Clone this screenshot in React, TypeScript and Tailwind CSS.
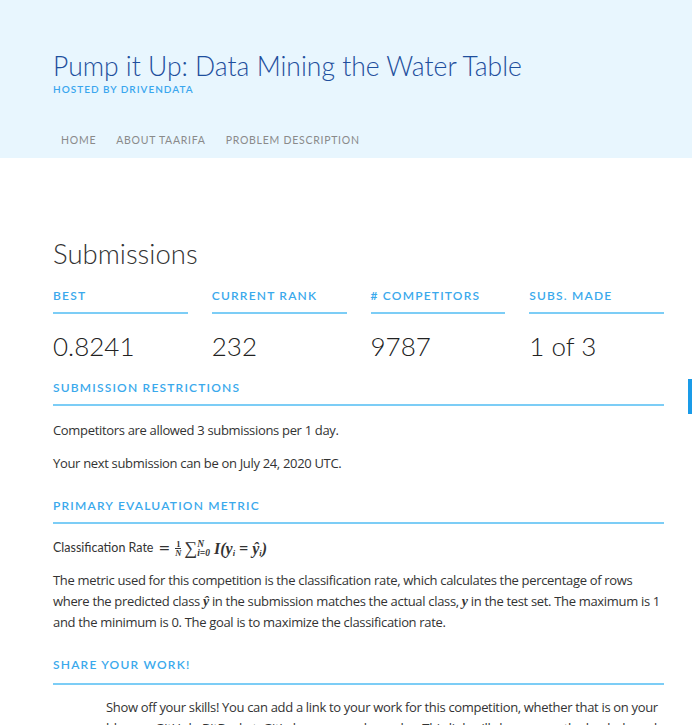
import React from "react";

const stats = [
  { label: "BEST", value: "0.8241" },
  { label: "CURRENT RANK", value: "232" },
  { label: "# COMPETITORS", value: "9787" },
  { label: "SUBS. MADE", value: "1 of 3" },
];

const SectionHead = ({ children, pad = "pb-[8px]" }: { children: React.ReactNode; pad?: string }) => (
  <div className={`border-b-2 border-[#7ccdf6] ${pad}`}>
    <h3 className="text-[12px] font-semibold tracking-[0.1em] text-[#3aa9ec] leading-[16px]">
      {children}
    </h3>
  </div>
);

export default function App() {
  return (
    <div className="relative min-h-[725px] w-[692px] overflow-hidden bg-white font-['Lato',sans-serif]">
      <header className="h-[158px] bg-[#e8f6fe] pl-[53px] pt-[50px]">
        <h1 className="text-[26.5px] font-light leading-[32px] text-[#1e4f9d]">
          Pump it Up: Data Mining the Water Table
        </h1>
        <p className="mt-[1px] text-[10px] font-semibold tracking-[0.1em] text-[#3aa6ee] leading-[12px]">
          HOSTED BY DRIVENDATA
        </p>
        <nav className="mt-[38px] ml-[8px] flex gap-[20px] text-[10.5px] tracking-[0.07em] text-[#8a8a8a]">
          <span>HOME</span>
          <span>ABOUT TAARIFA</span>
          <span>PROBLEM DESCRIPTION</span>
        </nav>
      </header>

      <main className="w-[664px] pl-[53px] pt-[79px]">
        <h2 className="text-[27.5px] font-light leading-[34px] text-[#333]">Submissions</h2>

        <div className="mt-[17px] grid grid-cols-4 gap-[24px]">
          {stats.map((s) => (
            <div key={s.label}>
              <div className="border-b-2 border-[#7ccdf6] pb-[8px] text-[12px] font-semibold tracking-[0.1em] text-[#3aa9ec] leading-[16px]">
                {s.label}
              </div>
              <div className="mt-[16px] text-[26px] font-light leading-[32px] text-[#222]">{s.value}</div>
            </div>
          ))}
        </div>

        <div className="mt-[18px]">
          <SectionHead>SUBMISSION RESTRICTIONS</SectionHead>
        </div>

        <div className="font-['Open_Sans',sans-serif] text-[13px] tracking-[-0.025em] text-[#333]">
          <p className="mt-[14px] leading-[20px]">Competitors are allowed 3 submissions per 1 day.</p>
          <p className="mt-[13px] leading-[20px]">Your next submission can be on July 24, 2020 UTC.</p>
        </div>

        <div className="mt-[25px]">
          <SectionHead>PRIMARY EVALUATION METRIC</SectionHead>
        </div>

        <div className="mt-[11px] flex items-center text-[#333]">
          <span className="text-[12.5px]">Classification Rate</span>
          <span className="mx-[5px] font-['DejaVu_Serif',serif] text-[14px]">=</span>
          <span className="inline-flex flex-col items-center font-['Liberation_Serif',serif] text-[8.5px] leading-[8px]">
            <span className="font-bold">1</span>
            <span className="border-t border-[#333] italic font-bold">N</span>
          </span>
          <span className="ml-[3px] font-['Liberation_Serif',serif] text-[18px]">∑</span>
          <span className="inline-flex flex-col font-['Liberation_Serif',serif] text-[9.5px] italic leading-[9px] font-bold">
            <span>N</span>
            <span>i=0</span>
          </span>
          <span className="ml-[4px] font-['Liberation_Serif',serif] text-[16px] italic font-bold">
            I(y<sub className="text-[8.5px]">i</sub> = ŷ<sub className="text-[8.5px]">i</sub>)
          </span>
        </div>

        <p className="mt-[8px] font-['Open_Sans',sans-serif] text-[13px] tracking-[-0.025em] leading-[21px] text-[#333]">
          The metric used for this competition is the classification rate, which calculates the percentage of rows
          where the predicted class <i className="font-['Liberation_Serif',serif] font-bold text-[14px]">ŷ</i> in the
          submission matches the actual class, <i className="font-['Liberation_Serif',serif] font-bold text-[14px]">y</i> in
          the test set. The maximum is 1 and the minimum is 0. The goal is to maximize the classification rate.
        </p>

        <div className="mt-[24px]">
          <SectionHead pad="pb-[10px]">SHARE YOUR WORK!</SectionHead>
        </div>

        <p className="mt-[12px] pl-[53px] font-['Open_Sans',sans-serif] text-[13px] tracking-[-0.025em] leading-[21px] text-[#333]">
          Show off your skills! You can add a link to your work for this competition, whether that is on your
          blog, on GitHub, BitBucket, GitLab, or somewhere else. This link will show up on the leaderboard
        </p>
      </main>

      <div className="absolute right-0 top-[379px] h-[35px] w-[4px] bg-[#1a9be8]" />
    </div>
  );
}
